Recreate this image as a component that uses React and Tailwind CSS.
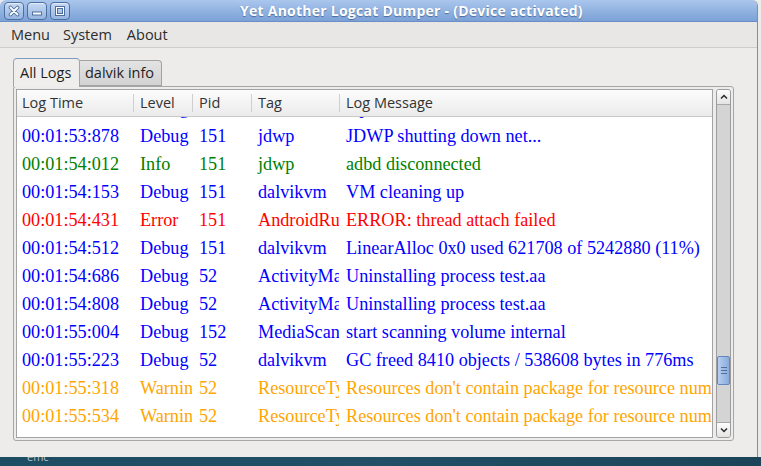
import React from "react";

const BLUE = "text-[#0000ff]";
const GREEN = "text-[#008000]";
const RED = "text-[#ff0000]";
const ORANGE = "text-[#ffa500]";

const rows = [
  ["00:01:53:750", "Debug", "151", "dalvikvm", "Hprof closed", BLUE],
  ["00:01:53:878", "Debug", "151", "jdwp", "JDWP shutting down net...", BLUE],
  ["00:01:54:012", "Info", "151", "jdwp", "adbd disconnected", GREEN],
  ["00:01:54:153", "Debug", "151", "dalvikvm", "VM cleaning up", BLUE],
  ["00:01:54:431", "Error", "151", "AndroidRuntime", "ERROR: thread attach failed", RED],
  ["00:01:54:512", "Debug", "151", "dalvikvm", "LinearAlloc 0x0 used 621708 of 5242880 (11%)", BLUE],
  ["00:01:54:686", "Debug", "52", "ActivityManager", "Uninstalling process test.aa", BLUE],
  ["00:01:54:808", "Debug", "52", "ActivityManager", "Uninstalling process test.aa", BLUE],
  ["00:01:55:004", "Debug", "152", "MediaScanner", "start scanning volume internal", BLUE],
  ["00:01:55:223", "Debug", "52", "dalvikvm", "GC freed 8410 objects / 538608 bytes in 776ms", BLUE],
  ["00:01:55:318", "Warning", "52", "ResourceType", "Resources don't contain package for resource number 0x7f0c0000", ORANGE],
  ["00:01:55:534", "Warning", "52", "ResourceType", "Resources don't contain package for resource number 0x7f0c0001", ORANGE],
];

function TitleButton({ children }) {
  return (
    <div className="w-[20px] h-[18px] rounded-[4px] border border-[#4d6f9f] bg-gradient-to-b from-[#c8daf3] to-[#95b4e0] flex items-center justify-center shadow-[inset_0_1px_0_#e2ecfa]">
      {children}
    </div>
  );
}

function HeaderCell({ w, first, children }) {
  return (
    <div className={`${w} h-full flex items-center shrink-0`}>
      {!first && <div className="w-px h-[18px] bg-[#cfcfcf]" />}
      <span className={first ? "pl-[5px]" : "pl-[6px]"}>{children}</span>
    </div>
  );
}

function Cell({ w, first, children }) {
  return (
    <div className={`${w} shrink-0 overflow-hidden whitespace-nowrap ${first ? "pl-[5px]" : "pl-[7px]"}`}>
      {children}
    </div>
  );
}

export default function App() {
  const ui = { fontFamily: '"Open Sans", "Noto Sans", sans-serif' };
  return (
    <div className="w-[761px] h-[466px] overflow-hidden bg-[#ebebeb] flex flex-col" style={ui}>
      <div className="w-[758px] h-[457px] flex flex-col bg-[#edeceb] rounded-t-[6px] border-r border-[#8c8c8c] overflow-hidden shrink-0">
        {/* Title bar */}
        <div className="h-[22px] shrink-0 flex items-center bg-gradient-to-b from-[#aac6ec] to-[#7ba1d7] border-b border-[#6a8fc4] pl-[4px]">
          <div className="flex gap-[3px]">
            <TitleButton>
              <svg width="12" height="12" viewBox="0 0 12 12">
                <path d="M2.5 2.5 L9.5 9.5 M9.5 2.5 L2.5 9.5" stroke="#4d6f9f" strokeWidth="3.6" strokeLinecap="round" />
                <path d="M2.5 2.5 L9.5 9.5 M9.5 2.5 L2.5 9.5" stroke="#ffffff" strokeWidth="1.8" strokeLinecap="round" />
              </svg>
            </TitleButton>
            <TitleButton>
              <svg width="12" height="12" viewBox="0 0 12 12">
                <rect x="1.5" y="7" width="9" height="3" fill="#ffffff" stroke="#4d6f9f" strokeWidth="1" />
              </svg>
            </TitleButton>
            <TitleButton>
              <svg width="12" height="12" viewBox="0 0 12 12">
                <rect x="1.5" y="1.5" width="9" height="9" fill="none" stroke="#4d6f9f" strokeWidth="1" />
                <rect x="2.5" y="2.5" width="7" height="7" fill="none" stroke="#ffffff" strokeWidth="1" />
                <rect x="3.5" y="3.5" width="5" height="5" fill="none" stroke="#4d6f9f" strokeWidth="1" />
              </svg>
            </TitleButton>
          </div>
          <div className="ml-[170px] text-white font-bold text-[14px] leading-none tracking-[0.25px] [text-shadow:0_1px_1px_#4a6b9c]">
            Yet Another Logcat Dumper - (Device activated)
          </div>
        </div>

        {/* Menu bar */}
        <div className="h-[26px] shrink-0 flex items-center bg-[#e8e7e6] border-b border-[#cdcdcd] text-[14.5px] text-[#2c2c2c] pl-[11px]">
          <span>Menu</span>
          <span className="ml-[13px]">System</span>
          <span className="ml-[15px]">About</span>
        </div>

        {/* Tabs */}
        <div className="mt-[10px] ml-[13px] flex items-end h-[28px] shrink-0 relative z-10 text-[14.5px] text-[#1e1e1e]">
          <div className="w-[67px] h-[29px] -mb-px border border-b-0 border-[#9aa6b6] border-t-[#7f9bc4] rounded-t-[4px] bg-[#efeeed] flex items-center pl-[6px]">
            All Logs
          </div>
          <div className="w-[82px] h-[26px] border border-l-0 border-[#a2a2a2] rounded-tr-[4px] bg-gradient-to-b from-[#e3e3e3] to-[#d2d2d2] flex items-center pl-[5px]">
            dalvik info
          </div>
        </div>

        {/* Pane */}
        <div className="ml-[13px] w-[721px] h-[355px] shrink-0 border border-[#a6a6a6] rounded-[3px] bg-[#edeceb] p-[2px] flex gap-[3px]">
          {/* table */}
          <div className="w-[697px] h-full border border-[#a3a3a3] bg-white flex flex-col overflow-hidden">
            <div className="h-[27px] shrink-0 flex bg-gradient-to-b from-[#fcfcfc] to-[#ebebeb] border-b border-[#c9c9c9] text-[14.5px] text-[#333333]">
              <HeaderCell w="w-[116px]" first>Log Time</HeaderCell>
              <HeaderCell w="w-[59px]">Level</HeaderCell>
              <HeaderCell w="w-[59px]">Pid</HeaderCell>
              <HeaderCell w="w-[88px]">Tag</HeaderCell>
              <HeaderCell w="flex-1">Log Message</HeaderCell>
            </div>
            <div className="flex-1 overflow-hidden" style={{ fontFamily: '"Liberation Serif", serif' }}>
              <div className="-mt-[23px]">
                {rows.map((r, i) => (
                  <div key={i} className={`h-[28px] flex items-center text-[18.2px] leading-[28px] ${r[5]}`}>
                    <Cell w="w-[116px]" first>{r[0]}</Cell>
                    <Cell w="w-[59px]">{r[1]}</Cell>
                    <Cell w="w-[59px]">{r[2]}</Cell>
                    <Cell w="w-[88px]">{r[3]}</Cell>
                    <Cell w="flex-1 min-w-0">{r[4]}</Cell>
                  </div>
                ))}
              </div>
            </div>
          </div>
          {/* scrollbar */}
          <div className="w-[15px] h-full border border-[#9c9c9c] rounded-[3px] bg-[#d4d4d4] flex flex-col overflow-hidden">
            <div className="h-[15px] shrink-0 bg-gradient-to-b from-[#fdfdfd] to-[#e4e4e4] border-b border-[#a8a8a8] flex items-center justify-center">
              <svg width="8" height="6" viewBox="0 0 8 6">
                <path d="M1 4.5 L4 1.5 L7 4.5" fill="none" stroke="#2a2a2a" strokeWidth="1.5" />
              </svg>
            </div>
            <div className="h-[251px] shrink-0" />
            <div className="h-[29px] shrink-0 rounded-[2px] border border-[#6387bd] bg-gradient-to-r from-[#b7cff0] to-[#89abdc] flex flex-col items-center justify-center gap-[2px]">
              <div className="w-[6px] h-px bg-[#4f6f9f]" />
              <div className="w-[6px] h-px bg-[#4f6f9f]" />
              <div className="w-[6px] h-px bg-[#4f6f9f]" />
            </div>
            <div className="flex-1" />
            <div className="h-[15px] shrink-0 bg-gradient-to-b from-[#fdfdfd] to-[#e4e4e4] border-t border-[#a8a8a8] flex items-center justify-center">
              <svg width="8" height="6" viewBox="0 0 8 6">
                <path d="M1 1.5 L4 4.5 L7 1.5" fill="none" stroke="#2a2a2a" strokeWidth="1.5" />
              </svg>
            </div>
          </div>
        </div>
      </div>
      {/* Desktop strip */}
      <div className="h-[9px] shrink-0 bg-gradient-to-r from-[#1d4d62] via-[#214f66] to-[#1b4458] overflow-hidden">
        <div className="ml-[27px] -mt-[6px] text-[11px] leading-none text-[#b8c4cc]">emc</div>
      </div>
    </div>
  );
}
